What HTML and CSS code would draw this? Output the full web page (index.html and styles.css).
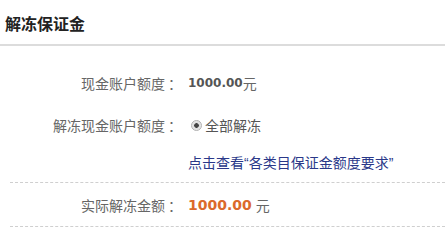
FILE: index.html
```html
<!DOCTYPE html>
<html lang="zh-CN">
<head>
<meta charset="utf-8">
<title>解冻保证金</title>
<link rel="stylesheet" href="styles.css">
</head>
<body>
<div class="panel">
  <div class="panel-head">
    <h2 class="panel-title">解冻保证金</h2>
  </div>
  <div class="form">
    <div class="form-row">
      <span class="label">现金账户额度<span class="colon">：</span></span>
      <span class="value"><b class="num">1000.00</b>元</span>
    </div>
    <div class="form-row">
      <span class="label">解冻现金账户额度<span class="colon">：</span></span>
      <span class="value">
        <label class="radio"><span class="radio-dot"></span>全部解冻</label>
      </span>
    </div>
    <div class="link-row">
      <a class="req-link" href="#">点击查看“各类目保证金额度要求”</a>
    </div>
    <div class="form-row total-row">
      <span class="label">实际解冻金额<span class="colon">：</span></span>
      <span class="value"><b class="num num-big">1000.00</b><span class="unit">元</span></span>
    </div>
  </div>
</div>
</body>
</html>
```
FILE: styles.css
```css
html, body {
  margin: 0;
  padding: 0;
  background: #fff;
}
body {
  font-family: "Noto Sans CJK SC", "Liberation Sans", sans-serif;
  font-size: 14px;
  color: #666;
}
.panel {
  width: 445px;
}
.panel-head {
  height: 44px;
  border-bottom: 2px solid #dcdcdc;
  padding-left: 5px;
  display: flex;
  align-items: center;
}
.panel-title {
  margin: 2px 0 0 0;
  font-size: 16px;
  font-weight: bold;
  color: #222;
  line-height: 20px;
}
.form {
  padding-top: 16px;
}
.form-row {
  display: flex;
  align-items: center;
  height: 42px;
}
.label {
  width: 182px;
  text-align: right;
  flex: none;
}
.colon {
  display: inline-block;
  padding-left: 3px;
}
.value {
  margin-left: 6px;
  display: flex;
  align-items: center;
}
.num {
  font-family: "DejaVu Sans", sans-serif;
  font-weight: bold;
  font-size: 12px;
  color: #555;
}
.num-big {
  font-size: 14px;
  color: #db6a2c;
}
.unit {
  margin-left: 4px;
}
.radio {
  display: flex;
  align-items: center;
  color: #555;
}
.radio-dot {
  width: 11px;
  height: 11px;
  box-sizing: border-box;
  border: 1px solid #b0b0b0;
  border-radius: 50%;
  background: radial-gradient(circle, #444 0, #444 2px, #dcdcdc 2.6px, #f4f4f4 100%);
  margin: 0 3px 0 3px;
}
.link-row {
  margin-left: 10px;
  padding: 6px 0 9px 178px;
  border-bottom: 1px dashed #cfcfcf;
  line-height: 20px;
}
.req-link {
  font-family: "Liberation Sans", "Noto Sans CJK SC", sans-serif;
  color: #2a3889;
  text-decoration: none;
}
.total-row {
  margin-left: 10px;
  height: 43px;
  border-bottom: 1px dashed #cfcfcf;
}
.total-row .label {
  width: 172px;
}
```
